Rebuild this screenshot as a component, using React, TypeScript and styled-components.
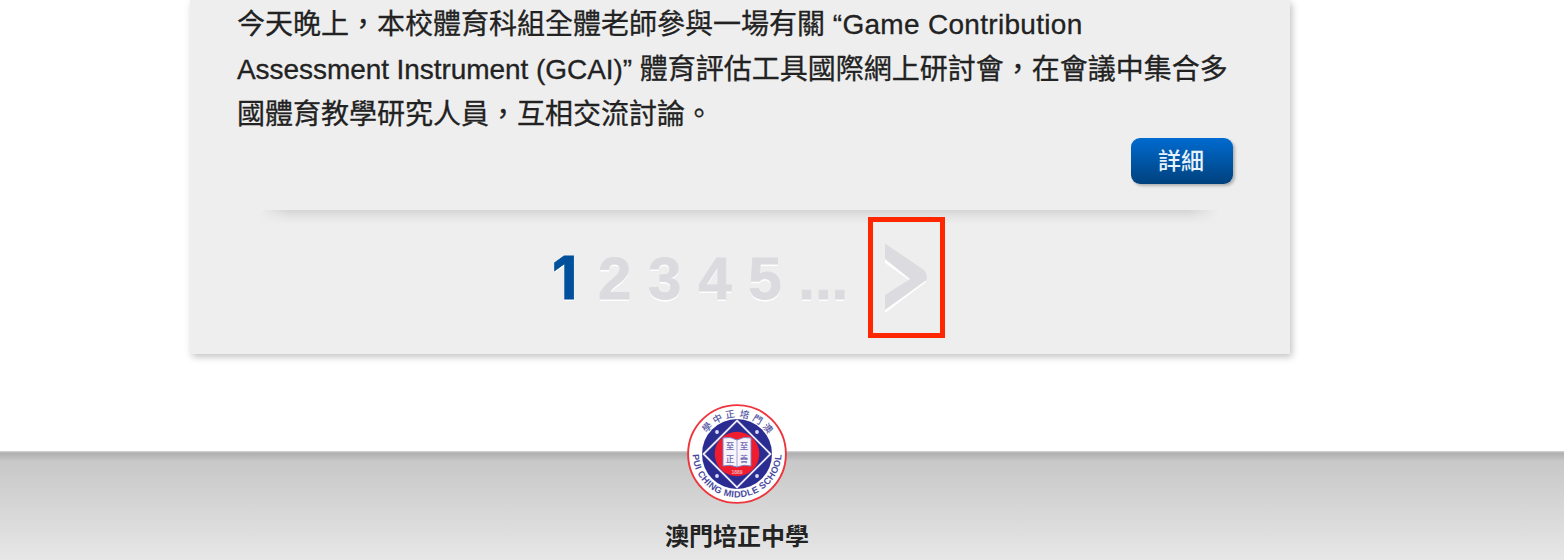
import React from "react";
import styled, { createGlobalStyle } from "styled-components";

const GlobalStyle = createGlobalStyle`
  body {
    margin: 0;
    background: #fff;
    color: #222;
    font-family: "Liberation Sans", "Noto Sans CJK TC", sans-serif;
  }
`;

const Page = styled.div`
  display: flex;
  flex-direction: column;
  width: 1564px;
  height: 560px;
  overflow: hidden;
`;

const Card = styled.main`
  box-sizing: border-box;
  flex: none;
  width: 1100px;
  height: 354px;
  margin-left: 190px;
  padding: 2px 47px 0;
  background: #eee;
  box-shadow: 2px 3px 7px rgba(0, 0, 0, 0.24);
`;

const Article = styled.p`
  margin: 0;
  font-size: 28px;
  line-height: 45px;
  -webkit-text-stroke: 0.3px #222;
`;

const Line = styled.span`
  display: block;
  height: 45px;
  white-space: nowrap;
`;

const Latin = styled.span<{ $tracking: number }>`
  letter-spacing: ${(p) => p.$tracking}px;
`;

const Actions = styled.div`
  display: flex;
  justify-content: flex-end;
  margin-right: 10px;
  padding-top: 1px;
`;

const DetailButton = styled.button`
  box-sizing: border-box;
  width: 102px;
  height: 46px;
  padding: 0 2px 3px 0;
  border: 0;
  border-radius: 9px;
  background: linear-gradient(#006bd0, #00417d);
  box-shadow: 2px 2px 3px rgba(0, 0, 0, 0.25);
  color: #e6f2fc;
  font: 500 23px/43px "Noto Sans CJK TC", sans-serif;
`;

const Divider = styled.div`
  height: 14px;
  margin: 26px 25px 0 23px;
  background: linear-gradient(#d5d5d5, #e3e3e3 45%, #eee);
  mask-image: linear-gradient(90deg, transparent, #000 28px, #000 calc(100% - 28px), transparent);
`;

const Pagination = styled.nav`
  display: flex;
  align-items: flex-start;
  padding-left: 311px;
  margin-top: -7px;
`;

const Pages = styled.div`
  width: 320px;
  padding-top: 26px;
  color: #dadadf;
  font-size: 60px;
  font-weight: 700;
  line-height: 69px;
  text-shadow: 0 2px 0 #fff;
  white-space: nowrap;
  -webkit-text-stroke: 0.8px currentColor;
`;

const Current = styled.span`
  display: inline-block;
  width: 33.4px;
  color: #00509b;
  font-family: Inter, sans-serif;
  font-size: 59px;
  text-align: center;
`;

const NextFrame = styled.a`
  position: relative;
  z-index: 1;
  box-sizing: border-box;
  width: 77px;
  height: 121px;
  border: 5px solid #ff2600;
`;

const Arrow = styled.svg`
  display: block;
  width: 67px;
  height: 111px;
`;

const Footer = styled.footer`
  display: flex;
  flex: none;
  flex-direction: column;
  align-items: center;
  height: 109px;
  margin-top: 97px;
  padding-right: 90px;
  background: linear-gradient(#d8d8d8 0, #b0b0b0 2px, #b4b4b4 4px, #c8c8c8 10px, #cacaca 18px, #e7e7e7 109px);
`;

const Crest = styled.svg`
  flex: none;
  width: 100px;
  height: 100px;
  margin-top: -47px;
`;

const SchoolName = styled.div`
  margin-top: 13px;
  font: 700 24px/36px "Noto Sans CJK TC", sans-serif;
`;

const topCharacters = [
  { char: "學", angle: -48 },
  { char: "中", angle: -29 },
  { char: "正", angle: -10 },
  { char: "培", angle: 11 },
  { char: "門", angle: 31 },
  { char: "澳", angle: 50 },
];

const SchoolCrest = () => (
  <Crest viewBox="0 0 100 100" role="img" aria-label="Pui Ching Middle School">
    <defs>
      <path id="motto-ring" d="M5.6 49A44.4 44.4 0 0 0 94.4 49" />
    </defs>
    <circle cx="50" cy="50" r="48.9" fill="#fff" stroke="#ee343c" strokeWidth="1.9" />
    <circle cx="50" cy="50" r="35" fill="#2b2c91" />
    <path d="M50 16.5L83.5 50 50 83.5 16.5 50Z" fill="#2b2c91" stroke="#e9e8f8" strokeWidth="1.9" />
    <circle cx="50" cy="50" r="22.3" fill="#ee1c2e" />
    <g fill="#dcdcf5">
      <circle cx="30" cy="28" r="1.9" />
      <circle cx="70" cy="28" r="1.9" />
      <circle cx="30" cy="72" r="1.9" />
      <circle cx="70" cy="72" r="1.9" />
    </g>
    <path
      d="M36 34Q43 32 50 36Q57 32 64 34V62Q57 60 50 63Q43 60 36 62Z"
      fill="#f7f4fb"
      stroke="#8580bd"
      strokeWidth="1"
    />
    <path d="M50 36V63" stroke="#a8a4cf" strokeWidth="1" />
    <g fill="#6965af" fontFamily="Noto Sans CJK TC, sans-serif" fontSize="8.5" fontWeight="500" textAnchor="middle">
      <text x="43" y="45">至</text>
      <text x="57" y="45">至</text>
      <text x="43" y="58">正</text>
      <text x="57" y="58">善</text>
    </g>
    <text x="50" y="69.7" fill="#f7b5bb" fontSize="5" textAnchor="middle" fontWeight="700">1889</text>
    <g fill="#5354a2" fontFamily="Noto Sans CJK TC, sans-serif" fontSize="9.5" fontWeight="500" textAnchor="middle">
      {topCharacters.map(({ char, angle }) => (
        <text key={char} x="50" y="13.2" transform={`rotate(${angle} 50 50)`}>
          {char}
        </text>
      ))}
    </g>
    <text fill="#4849a0" fontFamily="Liberation Sans, sans-serif" fontSize="9.2" fontWeight="700">
      <textPath href="#motto-ring" startOffset="1.5" textLength="136">
        PUI CHING MIDDLE SCHOOL
      </textPath>
    </text>
  </Crest>
);

export default function App() {
  return (
    <Page>
      <GlobalStyle />
      <Card>
        <Article>
          <Line>
            今天晚上，本校體育科組全體老師參與一場有關 <Latin $tracking={0.3}>“Game Contribution</Latin>
          </Line>
          <Line>
            <Latin $tracking={-0.06}>Assessment Instrument (GCAI)”</Latin> 體育評估工具國際網上研討會，在會議中集合多
          </Line>
          <Line>國體育教學研究人員，互相交流討論。</Line>
        </Article>
        <Actions>
          <DetailButton>詳細</DetailButton>
        </Actions>
        <Divider />
        <Pagination>
          <Pages>
            <Current>1</Current> 2 3 4 5 ...
          </Pages>
          <NextFrame>
            <Arrow viewBox="0 0 67 111">
              <path d="M12 25.5L53 54V60L12 91V75L36 58 12 41Z" fill="#fff" />
              <path d="M12 21.5L51 48Q55 52 53.5 58L12 88V73L37 57 12 37Z" fill="#dcdce0" />
            </Arrow>
          </NextFrame>
        </Pagination>
      </Card>
      <Footer>
        <SchoolCrest />
        <SchoolName>澳門培正中學</SchoolName>
      </Footer>
    </Page>
  );
}
